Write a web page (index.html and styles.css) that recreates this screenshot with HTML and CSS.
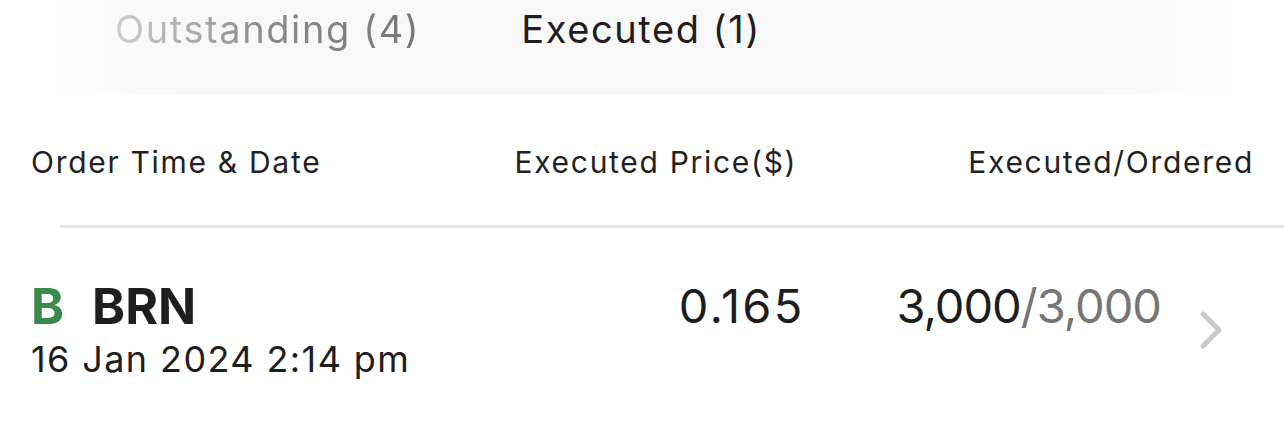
FILE: index.html
```html
<!DOCTYPE html>
<html>
<head>
<meta charset="utf-8">
<link rel="stylesheet" href="styles.css">
</head>
<body>
<div class="page">
  <nav class="tabs">
    <div class="tab tab-inactive">Outstanding (4)</div>
    <div class="tab tab-active">Executed (1)</div>
  </nav>
  <div class="head">
    <div class="col-time">Order Time &amp; Date</div>
    <div class="col-price">Executed Price($)</div>
    <div class="col-qty">Executed/Ordered</div>
  </div>
  <div class="divider"></div>
  <div class="row">
    <div class="cell-time">
      <div class="sym"><span class="side">B</span><span class="code">BRN</span></div>
      <div class="date">16 Jan 2024 2:14 pm</div>
    </div>
    <div class="cell-price">0.165</div>
    <div class="cell-qty"><span class="done">3,000</span><span class="total">/3,000</span></div>
    <svg class="chev" width="26" height="40" viewBox="0 0 26 40"><path d="M5 4 L21 20 L5 36" fill="none" stroke="#c9c9c9" stroke-width="5" stroke-linecap="round" stroke-linejoin="round"/></svg>
  </div>
</div>
</body>
</html>
```
FILE: styles.css
```css
* { box-sizing: border-box; }
html, body { margin: 0; padding: 0; background: #fff; }
body { font-family: Inter, "Noto Sans", sans-serif; color: #1e1e1e; width: 1284px; height: 421px; overflow: hidden; }
.page { width: 1284px; }
.tabs {
  height: 95px;
  margin: 0 58px 0 55px;
  display: flex;
  align-items: flex-start;
  padding: 4px 0 0 60px;
  gap: 101px;
  background: linear-gradient(90deg, #fdfdfd 0%, #f8f8f8 12%, #f8f8f8 88%, #fdfdfd 100%);
}
.tab { font-size: 38px; line-height: 50px; letter-spacing: 1.6px; }
.tab-inactive {
  background: linear-gradient(90deg, #cdcdcd 0%, #8a8a8a 50%, #787878 100%);
  -webkit-background-clip: text; background-clip: text; color: transparent;
}
.tab-active { color: #1e1e1e; }
.head {
  display: flex;
  align-items: center;
  height: 130px;
  padding: 4px 30px 0 31px;
  font-size: 30px;
  letter-spacing: 1.7px;
  color: #222;
}
.col-time { flex: 1; }
.col-price { margin-right: 171px; }
.divider { height: 3px; background: #e6e6e6; margin-left: 60px; }
.row {
  display: flex;
  align-items: flex-start;
  padding: 58px 0 0 31px;
}
.cell-time { flex: 1; }
.sym { font-size: 50px; font-weight: 700; line-height: 40px; display: flex; gap: 28px; }
.side { color: #3a8a4a; }
.code { color: #1e1e1e; }
.date { font-size: 36px; line-height: 50px; margin-top: 8px; color: #1e1e1e; letter-spacing: 1.4px; }
.cell-price { font-size: 47px; line-height: 40px; letter-spacing: 2.2px; margin-right: 92px; }
.cell-qty { font-size: 47px; line-height: 40px; letter-spacing: -1px; margin-right: 37px; }
.total { color: #767676; }
.chev { margin-top: 24px; margin-right: 60px; }
```
